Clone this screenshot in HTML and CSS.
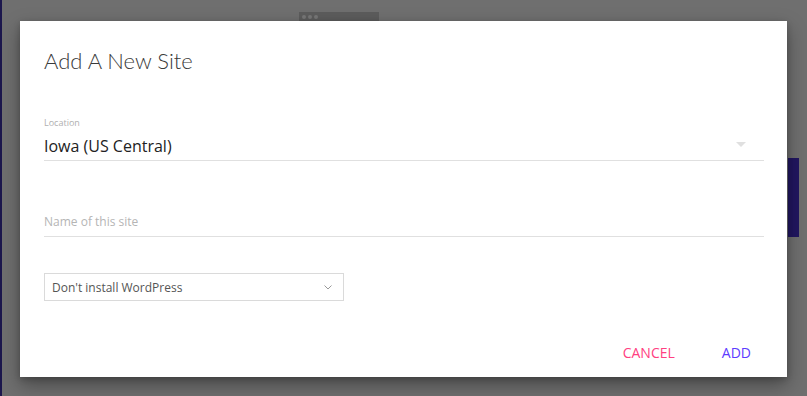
FILE: index.html
```html
<!DOCTYPE html>
<html>
<head>
<meta charset="utf-8">
<link rel="stylesheet" href="styles.css">
</head>
<body>
<div class="page">
  <div class="bg-window"><span></span><span></span><span></span></div>
  <div class="bg-bar"></div>
  <div class="dialog">
    <h1 class="title">Add A New Site</h1>
    <div class="field field-select">
      <label class="field-label">Location</label>
      <div class="field-value">
        <span>Iowa (US Central)</span>
        <svg class="caret" width="10" height="5" viewBox="0 0 10 5"><path d="M0 0H10L5 5Z" fill="#e0e0e0"/></svg>
      </div>
    </div>
    <div class="field field-text">
      <span class="placeholder">Name of this site</span>
    </div>
    <div class="select-box">
      <span>Don't install WordPress</span>
      <svg class="chev" width="8" height="5" viewBox="0 0 8 5"><path d="M0.5 0.5L4 4L7.5 0.5" fill="none" stroke="#999" stroke-width="1"/></svg>
    </div>
    <div class="actions">
      <button class="btn btn-cancel">CANCEL</button>
      <button class="btn btn-add">ADD</button>
    </div>
  </div>
</div>
</body>
</html>
```
FILE: styles.css
```css
html, body {
  margin: 0;
  padding: 0;
  height: 100%;
}
body {
  background: #6f6f6f;
  font-family: "Open Sans", "Noto Sans", sans-serif;
  overflow: hidden;
}
.page {
  position: relative;
  height: 396px;
  border-left: 2px solid #1c174d;
  box-sizing: border-box;
  padding: 21px 0 0 18px;
}
.bg-window {
  position: absolute;
  left: 297px;
  top: 12px;
  width: 80px;
  height: 12px;
  background: #5c5c5c;
  display: flex;
  align-items: center;
  gap: 2px;
  padding: 0 0 3px 3px;
  box-sizing: border-box;
}
.bg-window span {
  width: 4px;
  height: 4px;
  border-radius: 50%;
  background: #777;
}
.bg-bar {
  position: absolute;
  left: 786px;
  top: 158px;
  width: 11px;
  height: 79px;
  background: #211660;
}
.dialog {
  position: relative;
  width: 767px;
  height: 356px;
  background: #fff;
  box-sizing: border-box;
  padding: 0 23px 0 24px;
  display: flex;
  flex-direction: column;
  box-shadow: 0 8px 18px rgba(0,0,0,0.35), 0 2px 6px rgba(0,0,0,0.2);
}
.title {
  margin: 0;
  padding-top: 27px;
  font-family: "Lato", sans-serif;
  font-weight: 300;
  font-size: 22px;
  line-height: 26px;
  color: #3a3a3a;
  letter-spacing: 0px;
}
.field-select {
  margin-top: 43px;
  border-bottom: 1px solid #e0e0e0;
}
.field-label {
  display: block;
  font-size: 9px;
  line-height: 11px;
  color: #b0b0b0;
}
.field-value {
  display: flex;
  align-items: center;
  justify-content: space-between;
  height: 32px;
  box-sizing: border-box;
  padding: 5px 0 1px;
  font-size: 16px;
  color: #222;
}
.caret {
  margin-right: 18px;
  margin-top: -4px;
}
.field-text {
  margin-top: 50px;
  border-bottom: 1px solid #e0e0e0;
  height: 26px;
  box-sizing: border-box;
  padding-bottom: 4px;
  display: flex;
  align-items: center;
}
.placeholder {
  font-size: 12px;
  color: #b5b5b5;
}
.select-box {
  margin-top: 36px;
  width: 300px;
  height: 28px;
  box-sizing: border-box;
  border: 1px solid #dadada;
  display: flex;
  align-items: center;
  justify-content: space-between;
  padding: 0 11px 0 7px;
  font-size: 12px;
  color: #555;
}
.actions {
  margin-top: auto;
  height: 34px;
  display: flex;
  justify-content: flex-end;
  align-items: flex-start;
  gap: 47px;
  padding-right: 13px;
}
.btn {
  background: none;
  border: none;
  padding: 0;
  font-family: "Open Sans", "Noto Sans", sans-serif;
  font-size: 14px;
  line-height: 20px;
  cursor: pointer;
}
.btn-cancel { color: #ff4081; }
.btn-add { color: #5c3cff; }
```
